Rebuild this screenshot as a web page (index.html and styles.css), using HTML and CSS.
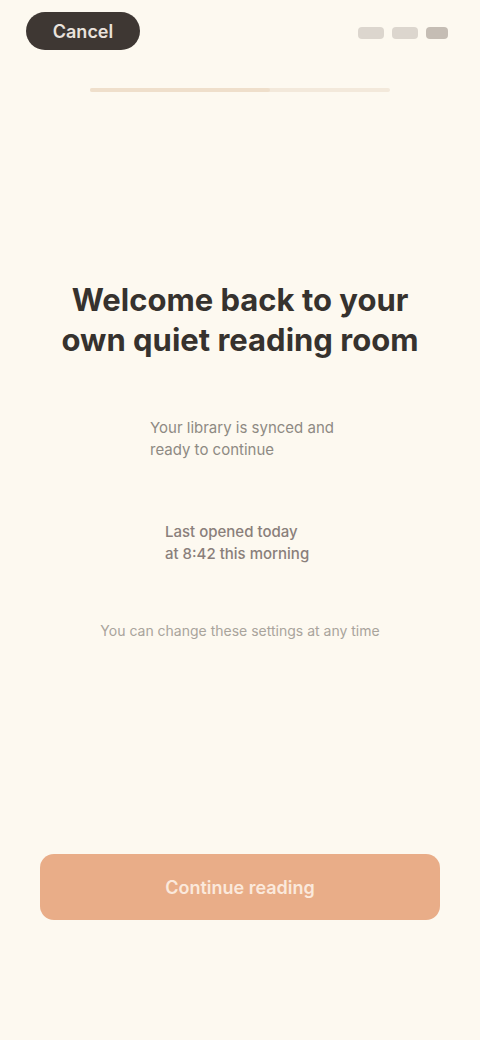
FILE: index.html
```html
<!DOCTYPE html>
<html lang="en">
<head>
<meta charset="utf-8">
<title>Welcome</title>
<link rel="stylesheet" href="styles.css">
</head>
<body>
<div class="screen">
  <header class="top">
    <button class="back">Cancel</button>
    <div class="status">
      <span class="dot"></span>
      <span class="dot"></span>
      <span class="dot dark"></span>
    </div>
  </header>
  <div class="progress"><div class="progress-fill"></div></div>
  <main class="content">
    <h1 class="title">Welcome back to your<br>own quiet reading room</h1>
    <p class="meta">Your library is synced and<br>ready to continue</p>
    <p class="meta strong">Last opened today<br>at 8:42 this morning</p>
    <p class="note">You can change these settings at any time</p>
  </main>
  <footer class="bottom">
    <button class="cta">Continue reading</button>
  </footer>
</div>
</body>
</html>
```
FILE: styles.css
```css
* { box-sizing: border-box; }
html, body { margin: 0; padding: 0; }
body {
  background: #fdf9f0;
  font-family: "Inter", "Liberation Sans", sans-serif;
  color: #2f2b28;
}
.screen {
  width: 480px;
  height: 1040px;
  display: flex;
  flex-direction: column;
}
.top {
  display: flex;
  justify-content: space-between;
  align-items: center;
  padding: 12px 32px 0 26px;
}
.back {
  border: none;
  background: #3e3733;
  color: #e9e2dc;
  font: 600 18px "Inter", "Liberation Sans", sans-serif;
  height: 38px;
  width: 114px;
  border-radius: 19px;
}
.status {
  display: flex;
  gap: 8px;
  align-items: center;
  padding-top: 4px;
}
.dot {
  width: 26px;
  height: 12px;
  border-radius: 4px;
  background: #dcd6ce;
}
.dot.dark { background: #c5bdb4; width: 22px; }
.progress {
  margin: 38px auto 0;
  width: 300px;
  height: 4px;
  border-radius: 2px;
  background: #f3e9db;
}
.progress-fill {
  width: 60%;
  height: 100%;
  border-radius: 2px;
  background: #efdfcb;
}
.content {
  flex: 1;
  display: flex;
  flex-direction: column;
  align-items: center;
  padding-top: 188px;
}
.title {
  margin: 0;
  width: 400px;
  text-align: center;
  font-size: 31px;
  line-height: 40px;
  font-weight: 700;
  color: #36322e;
}
.meta {
  margin: 57px 0 0 20px;
  width: 200px;
  white-space: nowrap;
  font-size: 15px;
  line-height: 22px;
  color: #8e8a83;
}
.meta.strong {
  margin-top: 60px;
  margin-left: 10px;
  width: 160px;
  color: #8a7f7b;
  font-weight: 500;
}
.note {
  margin: 56px 0 0;
  font-size: 14px;
  line-height: 20px;
  color: #a9a49c;
  text-align: center;
}
.bottom {
  padding: 0 40px 120px;
}
.cta {
  width: 100%;
  height: 66px;
  border: none;
  border-radius: 14px;
  background: #e9ad88;
  color: #fbe9dc;
  font: 600 18px "Inter", "Liberation Sans", sans-serif;
}
```
